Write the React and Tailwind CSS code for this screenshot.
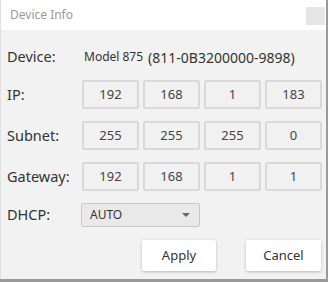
import React from 'react';

const Field = ({ value }) => (
  <div className="w-[57px] h-[29px] flex items-center justify-center bg-[#f1f1f1] border-2 border-[#d9d9d9] rounded-[2px] text-[13px] text-[#444]">
    {value}
  </div>
);

const Row = ({ label, values }) => (
  <div className="flex items-center h-[29px]">
    <div className="w-[81px] pl-[6px] text-[14.5px] text-[#333]">{label}</div>
    <div className="flex gap-[4px]">
      {values.map((v, i) => (
        <Field key={i} value={v} />
      ))}
    </div>
  </div>
);

export default function App() {
  return (
    <div className="w-[328px] h-[282px] bg-[#9a9a9a] overflow-hidden" style={{ fontFamily: '"Noto Sans", "Open Sans", sans-serif' }}>
      <div className="w-[326px] h-[279px] flex flex-col bg-[#f2f2f2] border-l border-[#e0e0e0]">
        {/* Title bar */}
        <div className="h-[30px] bg-white flex items-center justify-between pl-[9px] pr-[1px] shrink-0">
          <span className="text-[12px] text-[#9a9a9a]">Device Info</span>
          <div className="w-[19px] h-[18px] bg-[#e6e6e6] mt-[2px]" />
        </div>

        {/* Body */}
        <div className="flex flex-col pt-[15px]">
          <div className="flex items-center h-[24px]">
            <div className="w-[83px] pl-[6px] text-[14.5px] text-[#333]">Device:</div>
            <span className="text-[12px] text-[#333]">Model 875</span>
            <span className="ml-[5px] text-[14px] text-[#333]">(811-0B3200000-9898)</span>
          </div>

          <div className="flex flex-col gap-[12px] mt-[11px]">
            <Row label="IP:" values={['192', '168', '1', '183']} />
            <Row label="Subnet:" values={['255', '255', '255', '0']} />
            <Row label="Gateway:" values={['192', '168', '1', '1']} />
          </div>

          <div className="flex items-center mt-[12px] h-[24px]">
            <div className="w-[80px] pl-[6px] text-[14.5px] text-[#333]">DHCP:</div>
            <div className="w-[119px] h-[24px] flex items-center justify-between pl-[8px] pr-[9px] bg-[#e9e9e9] border border-[#c8c8c8] rounded-[2px]">
              <span className="text-[12px] text-[#333]">AUTO</span>
              <svg width="8" height="4" viewBox="0 0 8 4">
                <path d="M0 0h8L4 4z" fill="#666" />
              </svg>
            </div>
          </div>

          <div className="flex justify-end gap-[30px] mt-[13px] pr-[5px]">
            <button className="w-[74px] h-[31px] bg-white rounded-[2px] shadow-[0_1px_3px_rgba(0,0,0,0.25)] text-[13px] text-[#333]">
              Apply
            </button>
            <button className="w-[75px] h-[31px] bg-white rounded-[2px] shadow-[0_1px_3px_rgba(0,0,0,0.25)] text-[13px] text-[#333]">
              Cancel
            </button>
          </div>
        </div>
      </div>
    </div>
  );
}
